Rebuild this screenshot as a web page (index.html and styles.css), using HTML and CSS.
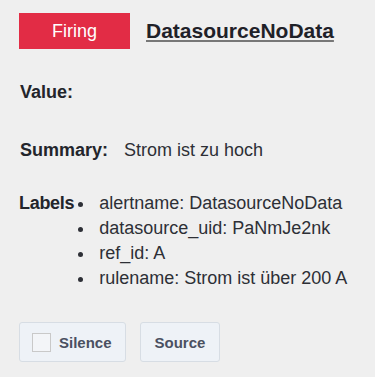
FILE: index.html
```html
<!DOCTYPE html>
<html lang="de">
<head>
    <meta charset="UTF-8">
    <meta name="viewport" content="width=device-width, initial-scale=1.0">
    <title>DatasourceNoData</title>
    <link rel="stylesheet" href="styles.css">
</head>
    <body>
        <div class="alerta">
            <div class="cabecera">
                <span class="estado">Firing</span>
                <a class="titulo" href="#">DatasourceNoData</a>
            </div>

            <div class="fila fila-valor">
                <span class="etiqueta">Value:</span>
            </div>

            <div class="fila fila-resumen">
                <span class="etiqueta">Summary:</span>
                <span class="texto">Strom ist zu hoch</span>
            </div>

            <div class="fila fila-labels">
                <span class="etiqueta">Labels</span>
                <ul class="lista">
                    <li>alertname: DatasourceNoData</li>
                    <li>datasource_uid: PaNmJe2nk</li>
                    <li>ref_id: A</li>
                    <li>rulename: Strom ist über 200 A</li>
                </ul>
            </div>

            <div class="botones">
                <button type="button" class="boton"><span class="casilla"></span>Silence</button>
                <button type="button" class="boton boton-source">Source</button>
            </div>
        </div>
    </body>
</html>
```

FILE: styles.css
```css
body {
    font-family: "Liberation Sans", Arial, sans-serif;
    margin: 0;
    background-color: #efefef;
    color: #23252b;
}

.alerta {
    padding: 13px 19px;
}

.cabecera {
    display: flex;
    align-items: center;
}

.estado {
    width: 111px;
    height: 36px;
    line-height: 36px;
    text-align: center;
    background-color: #e22c45;
    color: #fff;
    font-size: 18px;
}

.titulo {
    margin-left: 16px;
    font-size: 21px;
    font-weight: bold;
    color: #1f2128;
    text-decoration-color: #777;
}

.fila {
    display: flex;
    font-size: 18px;
    line-height: 25px;
}

.etiqueta {
    font-weight: bold;
    padding-left: 1px;
}

.fila-valor {
    margin-top: 31px;
}

.fila-resumen {
    margin-top: 33px;
}

    .fila-resumen .texto {
        margin-left: 16px;
        color: #2d2f36;
    }

.fila-labels {
    margin-top: 28px;
}

    .fila-labels .etiqueta {
        padding-left: 0;
        letter-spacing: -0.3px;
    }

.lista {
    margin: 0;
    padding-left: 21px;
    color: #2d2f36;
}

    .lista li {
        padding-left: 4px;
    }

.botones {
    display: flex;
    gap: 14px;
    margin-top: 31px;
}

.boton {
    display: flex;
    align-items: center;
    height: 40px;
    padding: 0 13px 0 12px;
    background-color: #eef2f7;
    border: 1px solid #d7dde4;
    border-radius: 3px;
    font-family: "Liberation Sans", Arial, sans-serif;
    font-size: 15px;
    font-weight: bold;
    color: #4a5061;
}

.boton-source {
    padding: 0 14px;
}

.casilla {
    width: 17px;
    height: 17px;
    margin-right: 8px;
    border: 1px solid #c9c9c9;
    background-color: #f3f5f8;
}
```
